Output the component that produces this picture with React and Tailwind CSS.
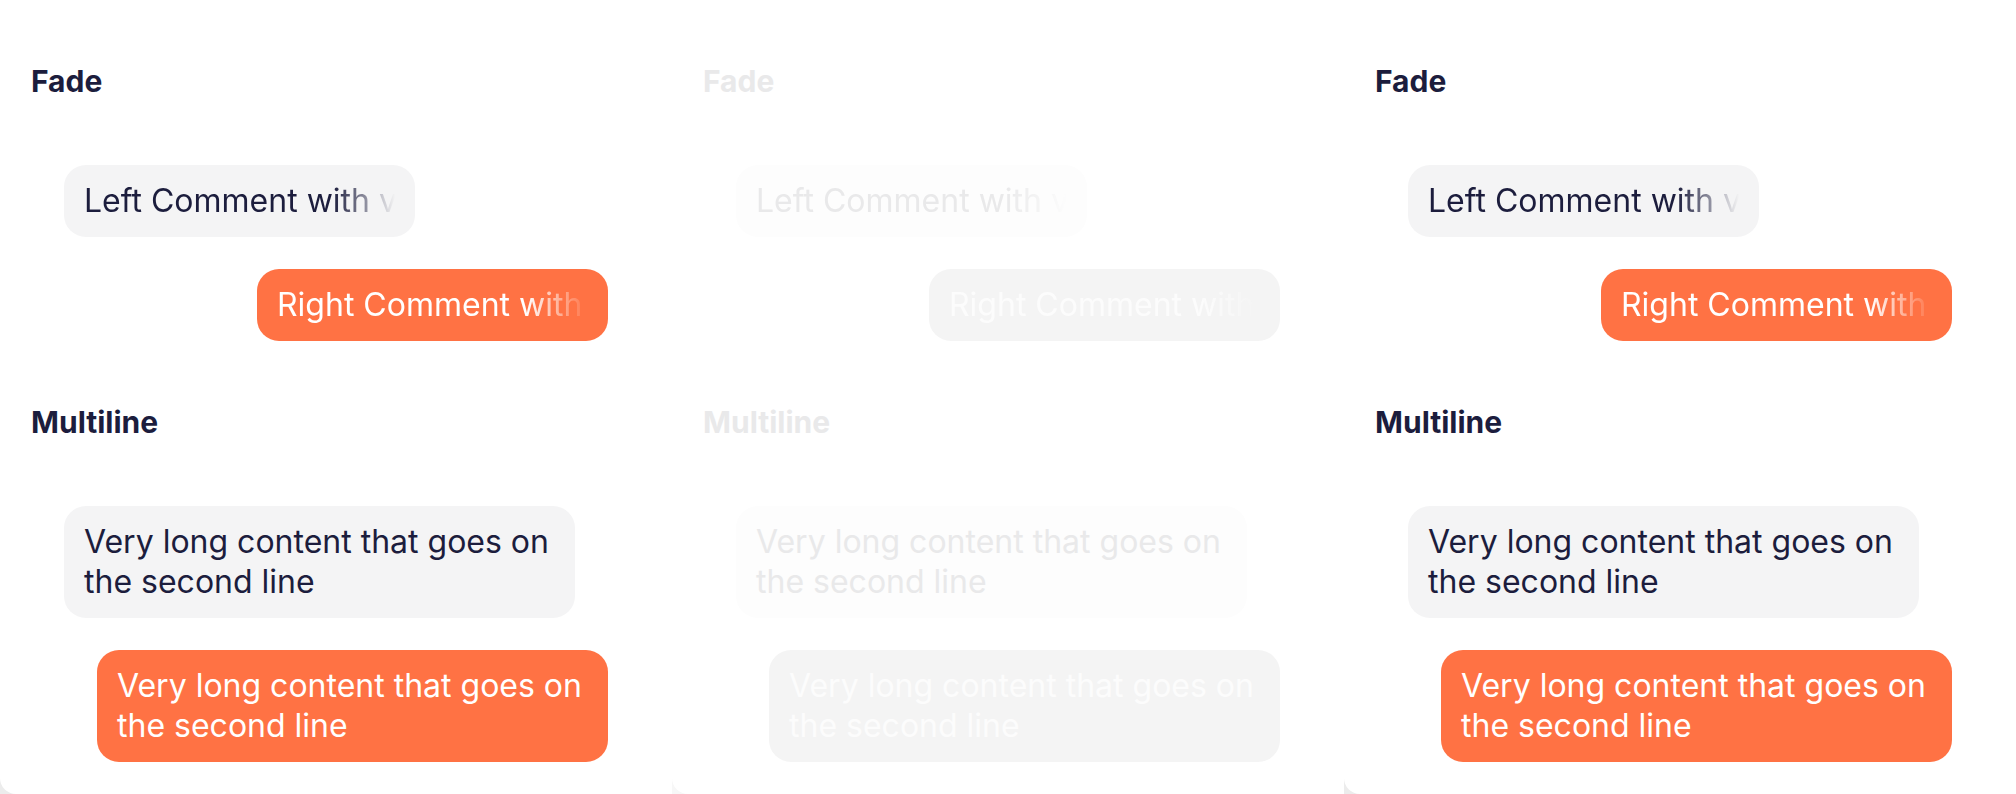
import React from "react";

const themes = {
  light: {
    frame: "bg-[#ececec]",
    heading: "text-[#1c1d3d]",
    leftBubble: "bg-[#f4f4f5] text-[#1c1d3d]",
    rightBubble: "bg-[#ff7244] text-white",
  },
  ghost: {
    frame: "bg-[#f7f7f7]",
    heading: "text-[#e9e9ea]",
    leftBubble: "bg-[#fdfdfd] text-[#e9e9ea]",
    rightBubble: "bg-[#f4f4f4] text-[#fcfcfc]",
  },
};

function Bubble({ side, theme, fade, children }) {
  const t = themes[theme];
  return (
    <div
      className={`rounded-[22px] px-5 py-4 text-[32px] leading-[40px] ${
        side === "left" ? `self-start ${t.leftBubble}` : `self-end ${t.rightBubble}`
      } ${fade ? "w-[351px]" : "max-w-[511px]"}`}
    >
      {fade ? (
        <div className="overflow-hidden whitespace-nowrap [mask-image:linear-gradient(to_right,#000_80%,transparent)] [-webkit-mask-image:linear-gradient(to_right,#000_80%,transparent)]">
          {children}
        </div>
      ) : (
        children
      )}
    </div>
  );
}

function Section({ title, theme, children }) {
  return (
    <section>
      <h2 className={`pl-[31px] text-[30px] font-bold leading-[36px] ${themes[theme].heading}`}>
        {title}
      </h2>
      <div className="mt-[66px] flex flex-col gap-8 px-16">{children}</div>
    </section>
  );
}

function Panel({ theme }) {
  return (
    <div className={`h-full w-[672px] ${themes[theme].frame}`}>
      <div className="flex h-full flex-col gap-[63px] rounded-bl-[16px] bg-white pt-[63px]">
        <Section title="Fade" theme={theme}>
          <Bubble side="left" theme={theme} fade>
            Left Comment with very long content that fades out
          </Bubble>
          <Bubble side="right" theme={theme} fade>
            Right Comment with very long content that fades out
          </Bubble>
        </Section>
        <Section title="Multiline" theme={theme}>
          <Bubble side="left" theme={theme}>
            Very long content that goes on the second line
          </Bubble>
          <Bubble side="right" theme={theme}>
            Very long content that goes on the second line
          </Bubble>
        </Section>
      </div>
    </div>
  );
}

export default function App() {
  return (
    <div className="flex h-screen w-full overflow-hidden bg-white font-['Inter',sans-serif]">
      <Panel theme="light" />
      <Panel theme="ghost" />
      <Panel theme="light" />
    </div>
  );
}
